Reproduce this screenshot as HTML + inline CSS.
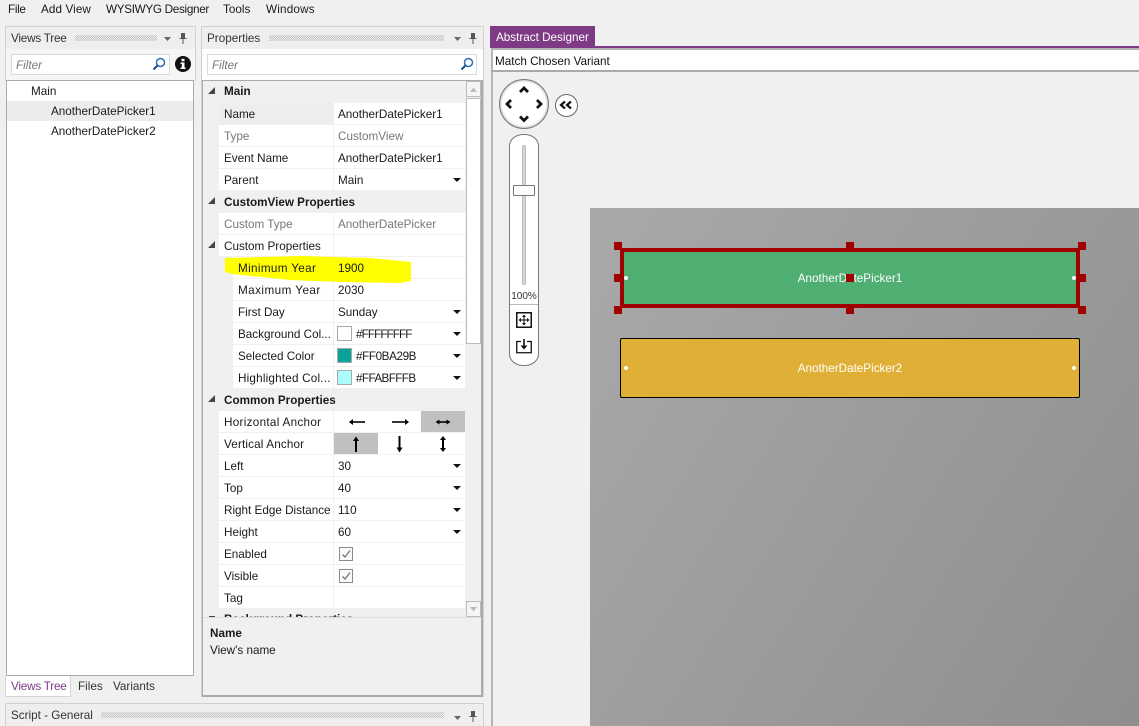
<!DOCTYPE html>
<html><head><meta charset="utf-8">
<style>
*{box-sizing:border-box}
html,body{margin:0;padding:0;width:1139px;height:726px;overflow:hidden;background:#f0f0f0}
body{font-family:"Liberation Sans",sans-serif;font-size:11.7px;color:#1a1a1a;position:relative}
.a{position:absolute;white-space:nowrap}
.t{position:absolute;white-space:nowrap;line-height:16px;height:16px;margin-top:1px}
.dots{position:absolute;height:6px;background:repeating-conic-gradient(#c4c4c4 0 25%,transparent 0 50%) 0 0/2px 2px}
.cell{position:absolute;background:#fff}
.gray{color:#777}
svg{position:absolute;overflow:visible}
</style></head><body>
<!-- menu -->
<div class="t" style="left:8px;top:1px;letter-spacing:-.3px">File</div>
<div class="t" style="left:41px;top:1px;letter-spacing:.1px">Add View</div>
<div class="t" style="left:106px;top:1px;letter-spacing:-.3px">WYSIWYG Designer</div>
<div class="t" style="left:223px;top:1px">Tools</div>
<div class="t" style="left:266px;top:1px;letter-spacing:.2px">Windows</div>

<!-- Views tree panel -->
<div class="a" style="left:5px;top:26px;width:191px;height:55px;background:#f5f5f5;border:1px solid #d0d0d0;border-bottom:none"></div>
<div class="a" style="left:6px;top:27px;width:189px;height:22px;background:#eee"></div>
<div class="t" style="left:11px;top:30px;color:#333;letter-spacing:-.2px">Views Tree</div>
<div class="dots" style="left:75px;top:35px;width:82px"></div>
<svg style="left:163px;top:37px" width="10" height="5"><path d="M1 0H8L4.500 4Z" fill="#666"/></svg>
<svg style="left:178px;top:32px" width="10" height="13"><path d="M3 1H7V6H8.500V7H1.500V6H3ZM4.500 7H5.500V12H4.500Z" fill="#555"/></svg>
<div class="a" style="left:11px;top:54px;width:159px;height:21px;background:#fff;border:1px solid #d5dbe3"></div>
<div class="t" style="left:16px;top:57px;color:#777;font-style:italic">Filter</div>
<svg style="left:152px;top:57px" width="14" height="14"><circle cx="8.500" cy="5.500" r="4" fill="none" stroke="#2a6fb5" stroke-width="1.500"/><path d="M5.500 8.500L1.500 12.500" stroke="#1d4f8a" stroke-width="2"/></svg>
<svg style="left:175px;top:56px" width="16" height="16"><circle cx="8" cy="8" r="8" fill="#111"/><rect x="6.500" y="2.800" width="3" height="2.500" fill="#fff"/><path d="M5.500 6.500H9.500V11.500H10.500V13H5.500V11.500H6.800V8H5.500Z" fill="#fff"/></svg>
<div class="a" style="left:6px;top:80px;width:188px;height:596px;background:#fff;border:1px solid #aaa"></div>
<div class="a" style="left:7px;top:101px;width:186px;height:20px;background:#ececec"></div>
<div class="t" style="left:31px;top:83px">Main</div>
<div class="t" style="left:51px;top:103px">AnotherDatePicker1</div>
<div class="t" style="left:51px;top:123px">AnotherDatePicker2</div>
<div class="a" style="left:5px;top:676px;width:66px;height:21px;background:#fff;border:1px solid #d5d5d5;border-top:none"></div>
<div class="t" style="left:11px;top:678px;color:#7b3a86;letter-spacing:-.2px">Views Tree</div>
<div class="t" style="left:78px;top:678px;color:#333">Files</div>
<div class="t" style="left:113px;top:678px;color:#333">Variants</div>
<!-- script panel -->
<div class="a" style="left:5px;top:703px;width:479px;height:23px;background:#eee;border:1px solid #d0d0d0;border-bottom:none"></div>
<div class="t" style="left:11px;top:707px;color:#333">Script - General</div>
<div class="dots" style="left:101px;top:712px;width:343px"></div>
<svg style="left:453px;top:716px" width="10" height="5"><path d="M1 0H8L4.500 4Z" fill="#666"/></svg>
<svg style="left:468px;top:710px" width="10" height="13"><path d="M3 1H7V6H8.500V7H1.500V6H3ZM4.500 7H5.500V12H4.500Z" fill="#555"/></svg>

<!-- Properties panel -->
<div class="a" style="left:201px;top:26px;width:283px;height:671px;background:#f0f0f0;border:1px solid #d0d0d0"></div>
<div class="a" style="left:202px;top:27px;width:281px;height:22px;background:#eee"></div>
<div class="t" style="left:207px;top:30px;color:#333">Properties</div>
<div class="dots" style="left:269px;top:35px;width:175px"></div>
<svg style="left:453px;top:37px" width="10" height="5"><path d="M1 0H8L4.500 4Z" fill="#666"/></svg>
<svg style="left:468px;top:32px" width="10" height="13"><path d="M3 1H7V6H8.500V7H1.500V6H3ZM4.500 7H5.500V12H4.500Z" fill="#555"/></svg>
<div class="a" style="left:202px;top:49px;width:281px;height:31px;background:#fff"></div>
<div class="a" style="left:207px;top:54px;width:270px;height:21px;background:#fff;border:1px solid #d5dbe3"></div>
<div class="t" style="left:212px;top:57px;color:#777;font-style:italic">Filter</div>
<svg style="left:460px;top:57px" width="14" height="14"><circle cx="8.500" cy="5.500" r="4" fill="none" stroke="#2a6fb5" stroke-width="1.500"/><path d="M5.500 8.500L1.500 12.500" stroke="#1d4f8a" stroke-width="2"/></svg>
<div class="a" style="left:202px;top:80px;width:281px;height:617px;border:1px solid #aaa;border-width:1px 2px 2px 1px;background:#f0f0f0"></div>
<div class="a" style="left:203px;top:617px;width:278px;height:1px;background:#ddd"></div>

<!-- rows: label cells -->
<div class="cell" style="left:219px;top:103px;width:114px;height:21px;background:#eee"></div>
<div class="cell" style="left:334px;top:103px;width:131px;height:21px"></div>
<div class="cell" style="left:219px;top:125px;width:114px;height:21px"></div><div class="cell" style="left:334px;top:125px;width:131px;height:21px"></div>
<div class="cell" style="left:219px;top:147px;width:114px;height:21px"></div><div class="cell" style="left:334px;top:147px;width:131px;height:21px"></div>
<div class="cell" style="left:219px;top:169px;width:114px;height:21px"></div><div class="cell" style="left:334px;top:169px;width:131px;height:21px"></div>
<div class="cell" style="left:219px;top:213px;width:114px;height:21px"></div><div class="cell" style="left:334px;top:213px;width:131px;height:21px"></div>
<div class="cell" style="left:219px;top:235px;width:114px;height:21px"></div><div class="cell" style="left:334px;top:235px;width:131px;height:21px"></div>
<div class="cell" style="left:233px;top:257px;width:100px;height:21px"></div><div class="cell" style="left:334px;top:257px;width:131px;height:21px"></div>
<div class="cell" style="left:233px;top:279px;width:100px;height:21px"></div><div class="cell" style="left:334px;top:279px;width:131px;height:21px"></div>
<div class="cell" style="left:233px;top:301px;width:100px;height:21px"></div><div class="cell" style="left:334px;top:301px;width:131px;height:21px"></div>
<div class="cell" style="left:233px;top:323px;width:100px;height:21px"></div><div class="cell" style="left:334px;top:323px;width:131px;height:21px"></div>
<div class="cell" style="left:233px;top:345px;width:100px;height:21px"></div><div class="cell" style="left:334px;top:345px;width:131px;height:21px"></div>
<div class="cell" style="left:233px;top:367px;width:100px;height:21px"></div><div class="cell" style="left:334px;top:367px;width:131px;height:21px"></div>
<div class="cell" style="left:219px;top:411px;width:114px;height:21px"></div><div class="cell" style="left:334px;top:411px;width:131px;height:21px"></div>
<div class="cell" style="left:219px;top:433px;width:114px;height:21px"></div><div class="cell" style="left:334px;top:433px;width:131px;height:21px"></div>
<div class="cell" style="left:219px;top:455px;width:114px;height:21px"></div><div class="cell" style="left:334px;top:455px;width:131px;height:21px"></div>
<div class="cell" style="left:219px;top:477px;width:114px;height:21px"></div><div class="cell" style="left:334px;top:477px;width:131px;height:21px"></div>
<div class="cell" style="left:219px;top:499px;width:114px;height:21px"></div><div class="cell" style="left:334px;top:499px;width:131px;height:21px"></div>
<div class="cell" style="left:219px;top:521px;width:114px;height:21px"></div><div class="cell" style="left:334px;top:521px;width:131px;height:21px"></div>
<div class="cell" style="left:219px;top:543px;width:114px;height:21px"></div><div class="cell" style="left:334px;top:543px;width:131px;height:21px"></div>
<div class="cell" style="left:219px;top:565px;width:114px;height:21px"></div><div class="cell" style="left:334px;top:565px;width:131px;height:21px"></div>
<div class="cell" style="left:219px;top:587px;width:114px;height:21px"></div><div class="cell" style="left:334px;top:587px;width:131px;height:21px"></div>

<!-- yellow highlight -->
<svg style="left:0;top:0" width="1139" height="726"><path d="M225 258L300 256L370 258L411 262L411 281L400 283L340 282L290 280L232 274L225 272Z" fill="#ffff00"/></svg>

<!-- group arrows -->
<svg style="left:207px;top:87px" width="10" height="320" fill="#444"><path d="M8 0V7H1Z"/><path d="M8 110V117H1Z"/><path d="M8 154V161H1Z"/><path d="M8 308V315H1Z"/></svg>
<svg style="left:209px;top:616px" width="6" height="1" fill="#444"><path d="M0 0H6V1H0Z"/></svg>

<!-- text -->
<div class="t" style="left:224px;top:83px;font-weight:bold">Main</div>
<div class="t" style="left:224px;top:106px">Name</div><div class="t" style="left:338px;top:106px">AnotherDatePicker1</div>
<div class="t gray" style="left:224px;top:128px">Type</div><div class="t gray" style="left:338px;top:128px">CustomView</div>
<div class="t" style="left:224px;top:150px">Event Name</div><div class="t" style="left:338px;top:150px">AnotherDatePicker1</div>
<div class="t" style="left:224px;top:172px">Parent</div><div class="t" style="left:338px;top:172px">Main</div>
<div class="t" style="left:224px;top:194px;font-weight:bold">CustomView Properties</div>
<div class="t gray" style="left:224px;top:216px">Custom Type</div><div class="t gray" style="left:338px;top:216px">AnotherDatePicker</div>
<div class="t" style="left:224px;top:238px">Custom Properties</div>
<div class="t" style="left:238px;top:260px;letter-spacing:.35px">Minimum Year</div><div class="t" style="left:338px;top:260px">1900</div>
<div class="t" style="left:238px;top:282px;letter-spacing:.45px">Maximum Year</div><div class="t" style="left:338px;top:282px">2030</div>
<div class="t" style="left:238px;top:304px">First Day</div><div class="t" style="left:338px;top:304px">Sunday</div>
<div class="t" style="left:238px;top:326px">Background Col...</div><div class="t" style="left:356px;top:326px;letter-spacing:-.9px">#FFFFFFFF</div>
<div class="t" style="left:238px;top:348px">Selected Color</div><div class="t" style="left:356px;top:348px;letter-spacing:-.4px">#FF0BA29B</div>
<div class="t" style="left:238px;top:370px;letter-spacing:.2px">Highlighted Col...</div><div class="t" style="left:356px;top:370px;letter-spacing:-.6px">#FFABFFFB</div>
<div class="a" style="left:337px;top:326px;width:15px;height:15px;background:#fff;border:1px solid #aaa"></div>
<div class="a" style="left:337px;top:348px;width:15px;height:15px;background:#0ba29b;border:1px solid #aaa"></div>
<div class="a" style="left:337px;top:370px;width:15px;height:15px;background:#abfffb;border:1px solid #aaa"></div>
<div class="t" style="left:224px;top:392px;font-weight:bold">Common Properties</div>
<div class="t" style="left:224px;top:414px;letter-spacing:.3px">Horizontal Anchor</div>
<div class="t" style="left:224px;top:436px;letter-spacing:.15px">Vertical Anchor</div>
<div class="a" style="left:421px;top:411px;width:44px;height:21px;background:#c0c0c0"></div>
<div class="a" style="left:334px;top:433px;width:44px;height:21px;background:#c0c0c0"></div>
<svg style="left:0;top:0" width="1139" height="726" fill="#000" stroke="none">
<path d="M350 421.200H365V422.800H350Z"/><path d="M353 419V425L349 422Z"/>
<path d="M392 421.200H407V422.800H392Z"/><path d="M405 419V425L409 422Z"/>
<path d="M437 421.200H449V422.800H437Z"/><path d="M439.500 419.500V424.500L435.500 422Z"/><path d="M446.500 419.500V424.500L450.500 422Z"/>
<path d="M355 439H357V452H355Z"/><path d="M353 441L356 436.500L359 441Z"/>
<path d="M398.500 436H400.500V449H398.500Z"/><path d="M396.500 447.500L399.500 452.500L402.500 447.500Z"/>
<path d="M442 439H444V449H442Z"/><path d="M440 440L443 436L446 440Z"/><path d="M440 448L443 452L446 448Z"/>
</svg>
<div class="t" style="left:224px;top:458px">Left</div><div class="t" style="left:338px;top:458px">30</div>
<div class="t" style="left:224px;top:480px">Top</div><div class="t" style="left:338px;top:480px">40</div>
<div class="t" style="left:224px;top:502px">Right Edge Distance</div><div class="t" style="left:338px;top:502px">110</div>
<div class="t" style="left:224px;top:524px">Height</div><div class="t" style="left:338px;top:524px">60</div>
<div class="t" style="left:224px;top:546px">Enabled</div>
<div class="t" style="left:224px;top:568px">Visible</div>
<div class="t" style="left:224px;top:590px">Tag</div>
<div class="a" style="left:339px;top:547px;width:14px;height:14px;background:#fafafa;border:1px solid #8a8a8a"></div>
<div class="a" style="left:339px;top:569px;width:14px;height:14px;background:#fafafa;border:1px solid #8a8a8a"></div>
<svg style="left:0;top:0" width="1139" height="726" fill="none" stroke="#777" stroke-width="1.300"><path d="M342.500 554.500L345 557L350 550.500"/><path d="M342.500 576.500L345 579L350 572.500"/></svg>
<!-- dropdown arrows -->
<svg style="left:0;top:0" width="1139" height="726" fill="#111"><path d="M453 178H461L457 182Z"/><path d="M453 310H461L457 314Z"/><path d="M453 332H461L457 336Z"/><path d="M453 354H461L457 358Z"/><path d="M453 376H461L457 380Z"/><path d="M453 464H461L457 468Z"/><path d="M453 486H461L457 490Z"/><path d="M453 508H461L457 512Z"/><path d="M453 530H461L457 534Z"/></svg>
<!-- clipped group -->
<div class="a" style="left:224px;top:609px;width:240px;height:8px;overflow:hidden"><div class="t" style="left:0;top:2px;font-weight:bold">Background Properties</div></div>
<!-- scrollbar -->
<div class="a" style="left:466px;top:81px;width:15px;height:536px;background:#f0f0f0"></div>
<div class="a" style="left:466px;top:81px;width:15px;height:16px;background:#f5f5f5;border:1px solid #bbb"></div>
<div class="a" style="left:466px;top:98px;width:15px;height:246px;background:#fff;border:1px solid #bbb"></div>
<div class="a" style="left:466px;top:601px;width:15px;height:16px;background:#f5f5f5;border:1px solid #bbb"></div>
<svg style="left:0;top:0" width="1139" height="726" fill="#bbb"><path d="M470 92H477L473.500 87.500Z"/><path d="M470 607H477L473.500 611.500Z"/></svg>
<div class="t" style="left:210px;top:625px;font-weight:bold">Name</div>
<div class="t" style="left:210px;top:642px">View's name</div>

<!-- Designer -->
<div class="a" style="left:490px;top:26px;width:105px;height:21px;background:#7f3a85"></div>
<div class="t" style="left:496px;top:29px;color:#fff">Abstract Designer</div>
<div class="a" style="left:490px;top:46px;width:649px;height:2px;background:#7f3a85"></div>
<div class="a" style="left:491px;top:48px;width:648px;height:2px;background:#b5b5b5"></div>
<div class="a" style="left:491px;top:48px;width:2px;height:678px;background:#b5b5b5"></div>
<div class="a" style="left:493px;top:50px;width:646px;height:20px;background:#fff"></div>
<div class="a" style="left:491px;top:70px;width:648px;height:2px;background:#aaa"></div>
<div class="t" style="left:495px;top:53px;color:#111">Match Chosen Variant</div>

<!-- nav -->
<div class="a" style="left:499px;top:79px;width:50px;height:50px;border-radius:50%;background:radial-gradient(circle,#fff 60%,#e0e0e0 100%);border:1px solid #777;box-shadow:inset 0 0 2px #888"></div>
<svg style="left:0;top:0" width="1139" height="726" fill="none" stroke="#111" stroke-width="2.800"><path d="M520 92L524 88L528 92"/><path d="M520 116.500L524 120.500L528 116.500"/><path d="M511 100L507 104L511 108"/><path d="M537 100L541 104L537 108"/></svg>
<div class="a" style="left:555px;top:94px;width:23px;height:23px;border-radius:50%;background:#fff;border:1px solid #666"></div>
<svg style="left:0;top:0" width="1139" height="726" fill="none" stroke="#111" stroke-width="2.200"><path d="M565 101.500L561 105L565 108.500"/><path d="M571 101.500L567 105L571 108.500"/></svg>
<!-- zoom slider -->
<div class="a" style="left:509px;top:134px;width:30px;height:232px;background:#fff;border:1px solid #777;border-radius:14px/12px"></div>
<div class="a" style="left:522px;top:145px;width:4px;height:140px;background:#d5d9d9;border:1px solid #bbb;border-radius:2px"></div>
<div class="a" style="left:513px;top:185px;width:22px;height:11px;background:#fdfdfd;border:1px solid #777;border-radius:1px"></div>
<div class="a" style="left:509px;top:291px;width:30px;text-align:center;font-size:10px;line-height:12px;color:#333">100%</div>
<div class="a" style="left:510px;top:304px;width:28px;height:1px;background:#bbb"></div>
<svg style="left:516px;top:312px" width="16" height="16"><rect x="0.750" y="0.750" width="14.500" height="14.500" fill="#fff" stroke="#111" stroke-width="1.500"/><path d="M8 3V13M3 8H13" stroke="#111"/><path d="M8 2.500L10 5H6ZM8 13.500L10 11H6ZM2.500 8L5 6V10ZM13.500 8L11 6V10Z" fill="#111"/></svg>
<svg style="left:516px;top:338px" width="16" height="16"><path d="M5 3.500H0.750V14.750H15.250V3.500H11" fill="none" stroke="#111" stroke-width="1.300"/><path d="M7.200 1H8.800V8H7.200Z M4.500 7.500H11.500L8 11.500Z" fill="#111"/></svg>

<!-- canvas -->
<div class="a" style="left:590px;top:208px;width:549px;height:518px;background:linear-gradient(122deg,#a9a9a9,#8e8e8e)"></div>
<div class="a" style="left:620px;top:248px;width:460px;height:60px;background:#4fae72;border:4px solid #a00000"></div>
<div class="t" style="left:620px;top:270px;width:460px;text-align:center;color:#fff">AnotherDatePicker1</div>
<div class="a" style="left:620px;top:338px;width:460px;height:60px;background:#dfb035;border:1px solid #000;border-radius:2px"></div>
<div class="t" style="left:620px;top:360px;width:460px;text-align:center;color:#fff">AnotherDatePicker2</div>
<svg style="left:0;top:0" width="1139" height="726"><g fill="#fff"><circle cx="626" cy="278" r="2"/><circle cx="1074" cy="278" r="2"/><circle cx="626" cy="368" r="2"/><circle cx="1074" cy="368" r="2"/></g>
<g fill="#a00000"><rect x="614" y="242" width="8" height="8"/><rect x="846" y="242" width="8" height="8"/><rect x="1078" y="242" width="8" height="8"/><rect x="614" y="274" width="8" height="8"/><rect x="846" y="274" width="8" height="8"/><rect x="1078" y="274" width="8" height="8"/><rect x="614" y="306" width="8" height="8"/><rect x="846" y="306" width="8" height="8"/><rect x="1078" y="306" width="8" height="8"/></g></svg>
</body></html>
